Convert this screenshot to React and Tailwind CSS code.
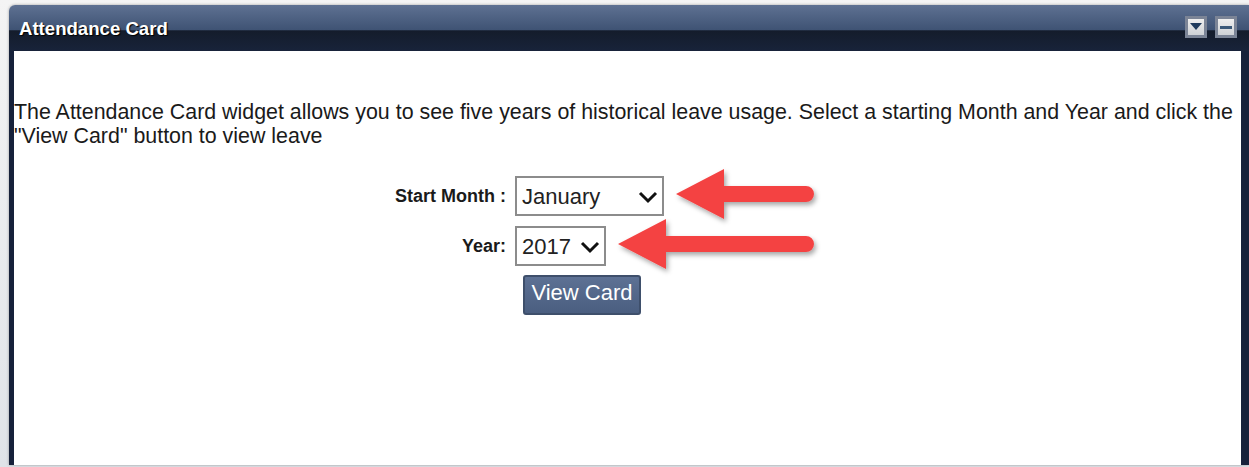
import React, { useState } from 'react';

const months = ['January', 'February', 'March', 'April', 'May', 'June', 'July', 'August', 'September', 'October', 'November', 'December'];
const years = ['2013', '2014', '2015', '2016', '2017'];

function Chevron() {
  return (
    <svg width="20" height="14" viewBox="0 0 20 14" className="pointer-events-none">
      <path d="M2 3 L10 11 L18 3" fill="none" stroke="#111" strokeWidth="3" />
    </svg>
  );
}

function Arrow({ length }) {
  const w = length + 20;
  return (
    <svg width={w} height="60" viewBox={`0 0 ${w} 60`} className="-my-[12px] overflow-visible">
      <defs>
        <filter id={`sh${length}`} x="-10%" y="-30%" width="130%" height="180%">
          <feDropShadow dx="2" dy="3" stdDeviation="2.5" floodColor="#000" floodOpacity="0.35" />
        </filter>
      </defs>
      <g filter={`url(#sh${length})`} fill="#f44343">
        <path d={`M2 28 L50 3 L50 20 L${length - 8} 20 A8 8 0 0 1 ${length - 8} 36 L50 36 L50 53 Z`} />
      </g>
    </svg>
  );
}

function SelectBox({ value, options, onChange, width }) {
  return (
    <div className={`relative flex items-center border-2 border-[#8c8c8c] bg-white ${width} h-[40px]`}>
      <select
        value={value}
        onChange={(e) => onChange(e.target.value)}
        className="appearance-none bg-transparent w-full h-full pl-[5px] pr-8 text-[22px] text-[#222] outline-none"
      >
        {options.map((o) => <option key={o}>{o}</option>)}
      </select>
      <div className="absolute right-[4px] top-[12px]"><Chevron /></div>
    </div>
  );
}

export default function App() {
  const [month, setMonth] = useState('January');
  const [year, setYear] = useState('2017');

  return (
    <div className="w-[1249px] h-[467px] overflow-hidden bg-gradient-to-b from-[#f4f4f4] to-[#dfe3e8] pl-[9px] pt-[5px] pb-[2px]" style={{ fontFamily: '"Liberation Sans", Arial, sans-serif' }}>
      <div className="h-full flex flex-col rounded-tl-[6px] overflow-hidden shadow-[0_0_3px_rgba(0,0,0,0.35)]">
        {/* title bar */}
        <div className="h-[46px] shrink-0 flex items-center justify-between pl-[10px] pr-[12px] bg-[linear-gradient(to_bottom,#5e7192_0%,#3f5374_54%,#141c2b_56%,#18233a_100%)]">
          <span className="text-[18.6px] font-bold text-white [text-shadow:1px_1px_1px_#000] pt-[2px]">Attendance Card</span>
          <div className="flex gap-[8px] mb-[2px]">
            <button className="w-[22px] h-[22px] border-[3px] border-[#7b8496] bg-gradient-to-b from-[#eeeeee] to-[#cfd2d6] flex items-center justify-center">
              <svg width="12" height="8" viewBox="0 0 12 8"><path d="M0 0 H12 L6 7 Z" fill="#1f3a5c" /></svg>
            </button>
            <button className="w-[22px] h-[22px] border-[3px] border-[#7b8496] bg-gradient-to-b from-[#eeeeee] to-[#cfd2d6] flex items-center justify-center">
              <div className="w-[12px] h-[3px] bg-[#3a5878]" />
            </button>
          </div>
        </div>

        {/* body with dark frame */}
        <div className="flex-1 flex bg-[#16213a] pl-[5px] pr-[8px]">
          <div className="flex-1 bg-white pt-[49px] text-[#1a1a1a]">
            <p className="text-[21.4px] leading-[24px]">
              The Attendance Card widget allows you to see five years of historical leave usage. Select a starting Month and Year and click the "View Card" button to view leave
            </p>

            <div className="mt-[28px] flex flex-col gap-[10px] pl-[292px]">
              <div className="flex items-center gap-[9px]">
                <label className="w-[200px] text-right text-[18px] font-bold">Start Month :</label>
                <SelectBox value={month} options={months} onChange={setMonth} width="w-[149px]" />
                <div className="ml-[1px] flex items-center"><Arrow length={140} /></div>
              </div>
              <div className="flex items-center gap-[9px]">
                <label className="w-[200px] text-right text-[18px] font-bold">Year:</label>
                <SelectBox value={year} options={years} onChange={setYear} width="w-[91px]" />
                <div className="ml-[1px] flex items-center"><Arrow length={198} /></div>
              </div>
              <div className="pl-[217px] -mt-[1px]">
                <button className="w-[118px] h-[40px] rounded-[3px] border-2 border-[#3e4f6b] bg-gradient-to-b from-[#5d7194] to-[#4a5e80] text-white text-[22px] leading-none pb-[4px]">
                  View Card
                </button>
              </div>
            </div>
          </div>
        </div>
      </div>
    </div>
  );
}
